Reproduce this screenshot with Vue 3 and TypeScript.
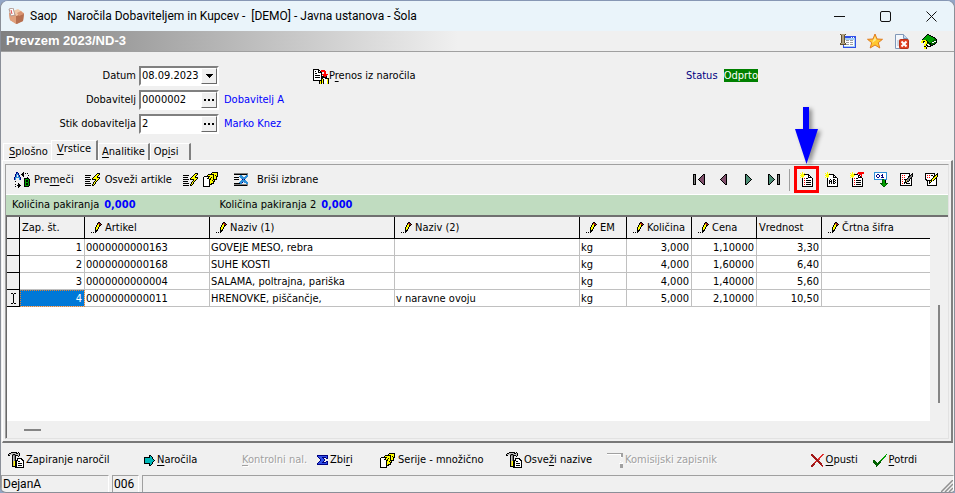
<script setup lang="ts">
import { h, ref } from 'vue'
import type { FunctionalComponent } from 'vue'

const palette: Record<string, string> = {
  k: '#000000', w: '#ffffff', y: '#ffff00', r: '#ff0000', g: '#00a000', G: '#006000',
  b: '#0040e0', n: '#000080', c: '#00b8b8', s: '#808080', l: '#c0c0c0', d: '#404040',
  p: '#80506c', t: '#4c8c74', m: '#a01818', e: '#e03030', o: '#d8c060', u: '#2f8fd8',
  a: '#a8d0f0', v: '#3050e8', q: '#b0a080', z: '#a0a0a0', x: '#605030',
}

const icons: Record<string, string[]> = {
  transfer: [
    'kkkkkk..........', 'kwwwwkk.rrrr....', 'kwkwwkwkrrrrr...', 'kwwwwkkkk..rr...',
    'kwkkwwwwk..rr...', 'kwwwwwwwkrrrrrr.', 'kwkkkkkwk.rrrr..', 'kwwwwwwwkkkrrk..',
    'kwkkkkkwkkkkkk..', 'kwwwwwwwkkwwkkkk', 'kwwwwwwwkykwwwyk', 'kkkkkkkkkykwwwyk',
    '......kykykwwwyk', '......kykykwwwyk', '......kyk.k...yk',
  ],
  move: [
    '..nn.....k......', '..nun...kk.k.k..', '.nuun..kkk......', '.nu.un..kk....k.',
    '.nu.un...k......', 'nuuuuun......k..', 'nu...un...kkkkk.', 'nu...un...kgggGk',
    '..........kgkkgk', '.k........kgkkgk', '..........kgggGk', '....k.....kgkkgk',
    '.k..kk....kgkkgk', '...kkkk...kgggGk', '.k..kk....kkkkk.', '....k...........',
  ],
  refresh: [
    '............kkk.', '...........kyyk.', 'kkkkkk....kyyk..', '.........kyyk...',
    'kkkkk...kyyykkk.', '.......kyyyyyyk.', 'kkkkkk.kkkkyyk..', '..........kyk...',
    'kkkkk....kyk....', '........kyk.....', 'kkkkkk..kyk.....', '.......kyk......',
    'kkkkkk.kk.......',
  ],
  stack: [
    '.........kkkkkk.', '........kyyyyyk.', '.....kkkkkkyyyk.', '....kyyyyykykyk.',
    '.kkkkkkyyykyykk.', 'kwwwwkyykykyyk..', 'kwwwkkykyykyyk..', 'kwwwwwkkyykkkk..',
    'kwwwwwkyykyk....', 'kwwwwwkyyykk....', 'kwwwwwkyyyk.....', 'kwwwwwkykkk.....',
    'kwwwwwkkk.......', 'kwwwwwk.........', 'kkkkkkk.........',
  ],
  erase: [
    'ssssssssssssss', 'kkkkkkkkkkkkks', '......uu....uu', '.....uuuu..uuu',
    'kkkkk.uuuuuuu.', '.......uuuuu..', 'kkkkk...nun...', '.......uuuuu..',
    '......uuuuuuu.', '.....uuun.uuuu', 'kkkkkkuu....uu', 'ssssssssssssss',
    'kkkkkkkkkkkkks',
  ],
  first: ['kkk.......kk', 'ksk......kpk', 'ksk.....kppk', 'ksk....kpppk', 'ksk...kppppk', 'ksk..kpppppk', 'ksk...kppppk', 'ksk....kpppk', 'ksk.....kppk', 'ksk......kpk', 'kkk.......kk'],
  prior: ['.....kk', '....kpk', '...kppk', '..kpppk', '.kppppk', 'kpppppk', '.kppppk', '..kpppk', '...kppk', '....kpk', '.....kk'],
  next: ['kk.....', 'ktk....', 'kttk...', 'ktttk..', 'kttttk.', 'ktttttk', 'kttttk.', 'ktttk..', 'kttk...', 'ktk....', 'kk.....'],
  last: ['kk.......kkk', 'ktk......ksk', 'kttk.....ksk', 'ktttk....ksk', 'kttttk...ksk', 'ktttttk..ksk', 'kttttk...ksk', 'ktttk....ksk', 'kttk.....ksk', 'ktk......ksk', 'kk.......kkk'],
  add: [
    '..y..........', 'y.y.y........', '.yyykkkkk....', 'yyyyywwwkk...',
    '.yyywwwwkwk..', 'y.y.wwwwkkkk.', '..kwrwkkwwwwk', '..kwwwwwwwwwk',
    '..kwrwkkkkkwk', '..kwwwwwwwwwk', '..kwrwkkkkkwk', '..kwwwwwwwwwk',
    '..kwrwkkkkkwk', '..kwwwwwwwwwk', '..kkkkkkkkkkk',
  ],
  addText: [
    '..y..........', 'y.y.y........', '.yyykkkkk....', 'yyyywwwwkk...',
    '.yyywwwwkwk..', 'y.y.wwwwkkkk.', '..kwwwwwwwwwk', '..kwwkwwkkwwk',
    '..kwkwkwkwkwk', '..kwkkkwkkwwk', '..kwkwkwkwkwk', '..kwkwkwkkwwk',
    '..kwwwwwwwwwk', '..kwwwwwwwwwk', '..kkkkkkkkkkk',
  ],
  addMarked: [
    '..y.....rrrrrr', 'y.y.y..rrrrrrr', '.yyykkkk.rrr..', 'yyyyywwwkk.r..',
    '.yyywwwwkwkr..', 'y.y.wwwwkkkk..', '..kwrwkkwwwwk.', '..kwwwwwwwwwk.',
    '..kwrwkkkkkwk.', '..kwwwwwwwwwk.', '..kwrwkkkkkwk.', '..kwwwwwwwwwk.',
    '..kwrwkkkkkwk.', '..kwwwwwwwwwk.', '..kkkkkkkkkkk.',
  ],
  digits: [
    'uuuuuuuuuuuuu...', 'uwwwwwwwwwwwu...', 'uwwnnwwwnwwwu...', 'uwnwwnwnnwwwu...',
    'uwnwwnwwnwwwu...', 'uwwnnwwnnnwwu...', 'uwwwwwwwwwwwu...', 'uuuuuuuuGGuuu...',
    '........Gggk....', '........Gggk....', '........Gggk....', '......GGGggGGG..',
    '.......GggggG...', '........GggG....', '.........GG.....',
  ],
  edit: [
    'kkkkkkkkkk..k', 'kwwwwwwwwk.kk', 'kwrwrwwwwkksk', 'kwwwwwwwkkssk',
    'kwrwrwwwkssk.', 'kwwwwwwksskk.', 'kwrwkkksskwk.', 'kwwwwkosskwk.',
    'kwrwwkokkwwk.', 'kwwwkkkwwwwk.', 'kwrwkwkkkkwk.', 'kwwwwwwwwwwk.',
    'kkkkkkkkkkkk.',
  ],
  editAlt: [
    'kkkkkkkkkk..k', 'kwwwwwwwwk.kk', 'kwrwrwkkwkkyk', 'kwwwwwwwkkyyk',
    'kwrwrwwwkyyk.', 'kwwwwwwkyykk.', 'kkwwwwkyykwk.', '.kkkkkkykwwk.',
    '..kwkykwwwwk.', '..kwkkwwwwwk.', '..kwkwwwwwwk.', '..kwwwwwwwwk.',
    '..kkkkkkkkkk.',
  ],
  pencil: [
    '.......kk..', '......kmmk.', '......kymmk', '.....kyykk.', '.....kyyk..', '....kyyk...',
    '....kyyk...', '....kyk....', '....kkk....', '....kk.....', 'k.k.k......',
  ],
  tools: [
    '...kkkkkk.k.....', '.kklllllkklk....', 'klllskkslllk....', 'kk..ksskkklk....',
    '....klsk..k.....', '....klsk........', '....klsk.kkkkk..', '....klsk.kwwwkk.',
    '....klskkkwwwwkk', '....koykkwkkwwwk', '....koykkwwwwwwk', '....koykkwkkkkwk',
    '....koykkwwwwwwk', '....koykkwkkkkwk', '....kkkkkwwwwwwk', '.......kkkkkkkkk',
  ],
  forward: ['.....kk....', '.....kck...', 'kkkkkkcck..', 'kccccccck..', 'kcccccccck.', 'kccccccccck', 'kcccccccck.', 'kccccccck..', 'kkkkkkcck..', '.....kck...', '.....kk....'],
  sum: ['nnnnnnnnnnn', 'nvvvvvvvvvn', '.nvvvnnnnvn', '..nvvvn..nn', '...nvvvn...', '...nvvvn...', '..nvvvn..nn', '.nvvvnnnnvn', 'nvvvvvvvvvn', 'nnnnnnnnnnn'],
  disabledDoc: ['zzzzzzzzzzzzzzzz', 'wwwwwwwwwwwwwwzz', '.............wzz', '.............wzz', '..............w.', '................', '................', '................', '.............w..', '...............w', '............wwww', '.............zzz', '.............zzz', '.............zzz', '.............zzz'],
  cancel: ['mm.........ee', 'mmm.......ee.', '.mmm.....ee..', '..mmm...ee...', '...mmm.ee....', '....mmmee....', '.....mmm.....', '....eemmm....', '...em..mmm...', '..mm....mmm..', '.mmm.....mm..', 'mmm.......mm.', 'mm.........e.'],
  confirm: ['.............g', '............g.', '...........gg.', '..........gg..', '.........gg...', '........gg....', 'GG.....gG.....', 'GGG...GG......', 'GGGG.GGG......', '.GGGGGG.......', '..GGGG........', '...GG.........', '...G..........'],
  cursor: ['kk.kk', '..k..', '..k..', '..k..', '..k..', '..k..', '..k..', '..k..', '..k..', '..k..', 'kk.kk'],
  columns: [
    'xqqqqx..........', '.xqqx...........', '.xqqxvvvvvvvvvvv', '.xqqxvvvvvvwvwvv', '.xqqxaaaaaaaaaav',
    '.xqqxaaaaaaaaaav', '.xqqxwzzzwzzzwav', '.xqqxwwwwwwwwwav', '.xqqxwzzzwzzzwav',
    'xqqqqxwwwwwwwwav', 'xxxxxxzzzwzzzwav', '...vwwwwwwwwwwav', '...vaaaaaaaaaaav', '...vvvvvvvvvvvvv',
  ],
  book: [
    '......kk........', '.....kggkk......', '....kgggggkk....', '...kggggggggkk..',
    '..kggggggggggGk.', '.kgggggggggggGGk', '.yyyykggggggGGGk', 'yykkyykggggGGwwk',
    'yyk.yykkggGwwGGk', '....yyGGkkGGGGk.', '...yykwwGkGGkk..', '...yykkwwkkk....',
    '...kk.kkkk......', '...yyk..........', '...yyk..........',
  ],
}

const PixelIcon: FunctionalComponent<{ name: string }> = (props) => {
  const rows = icons[props.name]
  const width = Math.max(...rows.map((r) => r.length))
  const cells = rows.flatMap((row, y) =>
    [...row].flatMap((c, x) => (palette[c] ? [h('rect', { x, y, width: 1, height: 1, fill: palette[c] })] : [])),
  )
  return h('svg', { width, height: rows.length, viewBox: `0 0 ${width} ${rows.length}`, 'shape-rendering': 'crispEdges', 'aria-hidden': 'true' }, cells)
}
PixelIcon.props = ['name']

const date = ref('08.09.2023')
const supplier = ref('0000002')
const contact = ref('2')

const columns = [
  { key: 'no', label: 'Zap. št.', editable: false },
  { key: 'item', label: 'Artikel', editable: true },
  { key: 'name1', label: 'Naziv (1)', editable: true },
  { key: 'name2', label: 'Naziv (2)', editable: true },
  { key: 'unit', label: 'EM', editable: true },
  { key: 'qty', label: 'Količina', editable: true },
  { key: 'price', label: 'Cena', editable: true },
  { key: 'value', label: 'Vrednost', editable: false },
  { key: 'barcode', label: 'Črtna šifra', editable: true },
]

const rows: Record<string, string>[] = [
  { no: '1', item: '0000000000163', name1: 'GOVEJE MESO, rebra', name2: '', unit: 'kg', qty: '3,000', price: '1,10000', value: '3,30', barcode: '' },
  { no: '2', item: '0000000000168', name1: 'SUHE KOSTI', name2: '', unit: 'kg', qty: '4,000', price: '1,60000', value: '6,40', barcode: '' },
  { no: '3', item: '0000000000004', name1: 'SALAMA, poltrajna, pariška', name2: '', unit: 'kg', qty: '4,000', price: '1,40000', value: '5,60', barcode: '' },
  { no: '4', item: '0000000000011', name1: 'HRENOVKE, piščančje,', name2: 'v naravne ovoju', unit: 'kg', qty: '5,000', price: '2,10000', value: '10,50', barcode: '' },
]
const selected = ref(3)

const navButtons = [
  { icon: 'first', label: 'Prvi' },
  { icon: 'prior', label: 'Prejšnji' },
  { icon: 'next', label: 'Naslednji' },
  { icon: 'last', label: 'Zadnji' },
]
const rowButtons = [
  { icon: 'addText', label: 'Dodaj opis' },
  { icon: 'addMarked', label: 'Vrini' },
  { icon: 'digits', label: 'Številčenje' },
  { icon: 'edit', label: 'Popravi' },
  { icon: 'editAlt', label: 'Uredi' },
]
</script>

<template>
  <div class="window">
    <header class="titlebar">
      <svg class="app-icon" width="18" height="17" viewBox="0 0 18 17" aria-hidden="true">
        <path d="M1 5l6-2 9 3-1 7-6 3-7-4z" fill="#c98563" />
        <path d="M1 5l7 3v8l-6-4z" fill="#e0a07c" />
        <path d="M8 8l8-3-1 8-7 3z" fill="#b66f50" />
        <path d="M5 3l5-2 6 4-8 3z" fill="#f0c8a8" />
        <path d="M9 5l4-2 3 3-5 2z" fill="#d99472" />
        <path d="M1 1l4-1 2 7-4 1z" fill="#fff" stroke="#b09890" />
        <path d="M3 2l1 4" stroke="#e04848" />
      </svg>
      <h1 class="title"><span>Saop</span><span>Naročila Dobaviteljem in Kupcev -&nbsp; [DEMO] - Javna ustanova - Šola</span></h1>
      <div class="window-buttons">
        <button type="button" aria-label="Pomanjšaj"><svg width="11" height="11" viewBox="0 0 11 11"><path d="M0 5.5h11" stroke="#111" /></svg></button>
        <button type="button" aria-label="Povečaj"><svg width="11" height="11" viewBox="0 0 11 11"><rect x=".5" y=".5" width="10" height="10" rx="1.5" fill="none" stroke="#111" /></svg></button>
        <button type="button" aria-label="Zapri"><svg width="11" height="11" viewBox="0 0 11 11"><path d="M.5.5l10 10m0-10l-10 10" stroke="#111" fill="none" /></svg></button>
      </div>
    </header>

    <div class="caption">
      <h2>Prevzem 2023/ND-3</h2>
      <div class="caption-tools">
        <button type="button" aria-label="Stolpci"><PixelIcon name="columns" /></button>
        <button type="button" aria-label="Priljubljene">
          <svg width="16" height="16" viewBox="0 0 16 16">
            <path d="M8 1l2 5 5.500.3-4.200 3.400 1.500 5.300L8 12l-4.800 3 1.500-5.300L.5 6.300 6 6z" fill="#ffc830" stroke="#e07a20" />
            <path d="M8 3.500L9.200 7 5 10z" fill="#ffe890" />
          </svg>
        </button>
        <button type="button" aria-label="Zapri dokument">
          <svg width="14" height="15" viewBox="0 0 14 15">
            <path d="M.5.5h8l4 4v10h-12z" fill="#f4f7fc" stroke="#8098b8" />
            <path d="M8.500.5v4h4" fill="#c8d8ee" stroke="#8098b8" />
            <path d="M2 7h2m-2 2h2m-2 2h2" stroke="#a8b8cc" />
            <rect x="4.500" y="5.500" width="9" height="9" rx="1" fill="#e04020" stroke="#b83018" />
            <path d="M6.500 7.500l5 5m0-5l-5 5" stroke="#fff" stroke-width="2" />
          </svg>
        </button>
        <button type="button" aria-label="Pomoč"><PixelIcon name="book" /></button>
      </div>
    </div>

    <section class="form">
      <div class="fields">
        <label for="date">Datum</label>
        <div class="field">
          <input id="date" v-model="date" type="text" />
          <button type="button" aria-label="Izberi datum"><svg width="7" height="4" viewBox="0 0 7 4" shape-rendering="crispEdges"><path d="M0 0h7L3.500 4z" /></svg></button>
        </div>
        <span></span>
        <label for="supplier">Dobavitelj</label>
        <div class="field">
          <input id="supplier" v-model="supplier" type="text" />
          <button type="button" aria-label="Izberi dobavitelja"><svg width="10" height="2" viewBox="0 0 10 2"><path d="M0 0h2v2H0zM4 0h2v2H4zM8 0h2v2H8z" /></svg></button>
        </div>
        <span class="linked">Dobavitelj A</span>
        <label for="contact">Stik dobavitelja</label>
        <div class="field">
          <input id="contact" v-model="contact" type="text" />
          <button type="button" aria-label="Izberi stik"><svg width="10" height="2" viewBox="0 0 10 2"><path d="M0 0h2v2H0zM4 0h2v2H4zM8 0h2v2H8z" /></svg></button>
        </div>
        <span class="linked">Marko Knez</span>
      </div>
      <button type="button" class="plain transfer"><PixelIcon name="transfer" /><span>P<u>r</u>enos iz naročila</span></button>
      <p class="status">Status <strong>Odprto</strong></p>
    </section>

    <nav class="tabs">
      <button type="button" class="tab"><span><u>S</u>plošno</span></button>
      <button type="button" class="tab active"><span><u>V</u>rstice</span></button>
      <button type="button" class="tab"><span><u>A</u>nalitike</span></button>
      <button type="button" class="tab"><span>Op<u>i</u>si</span></button>
    </nav>

    <main class="page">
      <div class="inner">
        <div class="toolbar">
          <button type="button" class="plain"><PixelIcon name="move" /><span>Pre<u>m</u>eči</span></button>
          <button type="button" class="plain"><PixelIcon name="refresh" /><span>Osveži artikle</span></button>
          <button type="button" class="plain" aria-label="Osveži serije"><PixelIcon name="refresh" /><PixelIcon name="stack" /></button>
          <button type="button" class="plain wide"><PixelIcon name="erase" /><span>Briši izbrane</span></button>
          <div class="icon-group">
            <button v-for="b in navButtons" :key="b.icon" type="button" class="plain" :aria-label="b.label"><PixelIcon :name="b.icon" /></button>
            <i class="separator"></i>
            <button type="button" class="plain highlighted" aria-label="Dodaj">
              <PixelIcon name="add" />
              <svg class="pointer" width="32" height="62" viewBox="0 0 32 62" aria-hidden="true">
                <path d="M13 2h6v22h9L16.500 59 5 24h8z" fill="#0000ff" />
              </svg>
            </button>
            <button v-for="b in rowButtons" :key="b.icon" type="button" class="plain" :aria-label="b.label"><PixelIcon :name="b.icon" /></button>
          </div>
        </div>

        <div class="summary">
          <span>Količina pakiranja</span><b>0,000</b>
          <span class="second">Količina pakiranja 2</span><b>0,000</b>
        </div>

        <div class="grid">
          <div class="sheet">
            <table>
              <colgroup>
                <col class="c-mark" /><col class="c-narrow" /><col class="c-item" /><col class="c-name" /><col class="c-name" />
                <col class="c-unit" /><col class="c-narrow" /><col class="c-narrow" /><col class="c-narrow" /><col />
              </colgroup>
              <thead>
                <tr>
                  <th></th>
                  <th v-for="c in columns" :key="c.key" :class="{ editable: c.editable }">
                    <div><PixelIcon v-if="c.editable" name="pencil" />{{ c.label }}</div>
                  </th>
                </tr>
              </thead>
              <tbody>
                <tr v-for="(row, i) in rows" :key="row.no" @click="selected = i">
                  <th><PixelIcon v-if="i === selected" name="cursor" /></th>
                  <td v-for="c in columns" :key="c.key" :class="[c.key, { selected: i === selected && c.key === 'no' }]">{{ row[c.key] }}</td>
                </tr>
              </tbody>
            </table>
          </div>
          <div class="scroll-v"><i></i></div>
          <div class="scroll-h"><i></i></div>
        </div>
      </div>
    </main>

    <footer class="actions">
      <button type="button" class="plain"><PixelIcon name="tools" /><span>Zapiranje naročil</span></button>
      <button type="button" class="plain"><PixelIcon name="forward" /><span><u>N</u>aročila</span></button>
      <button type="button" class="plain" disabled><span><u>K</u>ontrolni nal.</span></button>
      <button type="button" class="plain"><PixelIcon name="sum" /><span>Zbi<u>r</u>i</span></button>
      <button type="button" class="plain"><PixelIcon name="stack" /><span>Serije - množično</span></button>
      <button type="button" class="plain"><PixelIcon name="tools" /><span>Osve<u>ž</u>i nazive</span></button>
      <button type="button" class="plain" disabled><PixelIcon name="disabledDoc" /><span>Komisijski zapisnik</span></button>
      <button type="button" class="plain"><PixelIcon name="cancel" /><span><u>O</u>pusti</span></button>
      <button type="button" class="plain"><PixelIcon name="confirm" /><span><u>P</u>otrdi</span></button>
    </footer>

    <div class="statusbar">
      <span>DejanA</span>
      <span>006</span>
      <span class="rest">
        <svg width="12" height="12" viewBox="0 0 12 12" aria-hidden="true"><path d="M0 12L12 0M4 12l8-8M8 12l4-4" stroke="#909090" stroke-width="1.500" /></svg>
      </span>
    </div>
  </div>
</template>

<style>
body {
  background: #93a6c6;
}
</style>

<style scoped>
.window {
  box-sizing: border-box;
  min-height: 100vh;
  display: flex;
  flex-direction: column;
  overflow: hidden;
  border: 1px solid #8a8f98;
  border-top-color: #8797b4;
  border-radius: 8px 8px 4px 6px;
  background: #f0f0f0;
  color: #000;
  font: 11px/14px "DejaVu Sans Condensed", "Noto Sans", sans-serif;
}
button {
  padding: 0;
  border: 0;
  background: none;
  color: inherit;
  font: inherit;
  white-space: nowrap;
}
svg {
  display: block;
  flex: none;
}
u {
  text-underline-offset: 2px;
}
.titlebar {
  display: flex;
  align-items: center;
  height: 30px;
  padding-left: 7px;
  background: #eaf4fa;
}
.title {
  flex: 1;
  display: flex;
  gap: 10px;
  margin: 0 0 0 4px;
  font: 12px/16px Roboto, "Noto Sans", sans-serif;
  white-space: nowrap;
}
.window-buttons {
  display: flex;
}
.window-buttons button {
  display: grid;
  place-items: center;
  width: 46px;
  height: 30px;
}
.caption {
  display: flex;
  align-items: center;
  justify-content: space-between;
  height: 20px;
  padding: 0 17px 0 5px;
  border-bottom: 1px solid #a0a0a0;
  background: linear-gradient(90deg, #808080, #f0f0f0 48%);
}
.caption h2 {
  margin: 0;
  color: #fff;
  font: bold 13px/18px "Liberation Sans", sans-serif;
}
.caption-tools {
  display: flex;
  gap: 11px;
}
.caption-tools button {
  display: grid;
  place-items: center;
  min-width: 16px;
}
.form {
  display: grid;
  grid-template-columns: 312fr 373fr 268fr;
  align-items: start;
  padding: 14px 0 6px;
}
.fields {
  display: grid;
  grid-template-columns: 135px 80px 1fr;
  align-items: center;
  row-gap: 4px;
  column-gap: 3px;
}
.fields label {
  text-align: right;
}
.field {
  box-sizing: border-box;
  display: flex;
  height: 20px;
  border: 2px solid;
  border-color: #808080 #fff #fff #808080;
  background: #fff;
}
.field input {
  flex: 1;
  min-width: 0;
  padding: 0 1px;
  border: 0;
  outline: 0;
  background: none;
  font: inherit;
}
.field button {
  display: grid;
  place-items: center;
  width: 16px;
  border: 1px solid;
  border-color: #fff #696969 #696969 #fff;
  background: #f0f0f0;
}
.linked {
  padding-left: 2px;
  color: #0000ff;
}
.plain {
  display: flex;
  align-items: center;
  gap: 4px;
}
.plain:disabled {
  color: #a0a0a0;
  text-shadow: 1px 1px #fff;
}
.transfer {
  height: 20px;
  gap: 0;
}
.status {
  margin: 0;
  color: #000080;
  line-height: 20px;
}
.status strong {
  margin-left: 3px;
  background: #008000;
  color: #fff;
  font-weight: normal;
}
.tabs {
  display: flex;
  align-items: flex-end;
  padding-left: 2px;
}
.tab {
  height: 17px;
  padding: 0 3px;
  border-top: 1px solid #fff;
  border-right: 2px solid #808080;
  border-left: 1px solid #fff;
}
.tab:first-child {
  padding-left: 5px;
  border-right: 0;
}
.tab:last-child {
  padding-right: 11px;
}
.tab.active {
  height: 20px;
  padding: 0 5px 3px;
}
.page {
  flex: 1;
  display: flex;
  margin: 0 1px;
  padding: 3px 2px 2px;
  border: 1px solid #fff;
  border-right: 2px solid #808080;
  border-bottom: 2px solid #787878;
}
.inner {
  flex: 1;
  min-width: 0;
  display: flex;
  flex-direction: column;
  border: 1px solid #e2e2e2;
  border-top-color: #a0a0a0;
  border-left-color: #a0a0a0;
}
.toolbar {
  display: flex;
  align-items: center;
  height: 29px;
  gap: 11px;
  padding: 0 4px 0 8px;
  border-bottom: 1px solid #fff;
}
.toolbar .wide {
  gap: 9px;
  margin-left: 4px;
}
.icon-group {
  display: flex;
  align-items: center;
  margin-left: auto;
}
.icon-group .plain {
  justify-content: center;
  width: 25px;
  height: 27px;
}
.separator {
  width: 1px;
  height: 22px;
  margin: 0 4px 0 3px;
  background: #a0a0a0;
}
.icon-group .highlighted {
  position: relative;
  box-sizing: border-box;
  border: 3px solid #ff0000;
}
.pointer {
  position: absolute;
  bottom: 23px;
  left: -7px;
  filter: drop-shadow(3px 2px 2px #00000066);
}
.summary {
  display: flex;
  align-items: center;
  height: 20px;
  padding-left: 6px;
  background: #c0dcc0;
}
.summary b {
  margin-left: 5px;
  color: #0000ff;
}
.summary .second {
  margin-left: 84px;
}
.grid {
  flex: 1;
  display: grid;
  grid-template: 1fr 17px / minmax(0, 1fr) 18px;
  border-top: 2px solid #707070;
  border-left: 1px solid #696969;
}
.sheet {
  background: #fff;
}
table {
  width: 100%;
  table-layout: fixed;
  border-spacing: 0;
}
.c-mark { width: 13px; }
.c-narrow { width: 65px; }
.c-item { width: 125px; }
.c-name { width: 185px; }
.c-unit { width: 47px; }
th {
  padding: 0;
  border-right: 1px solid #000;
  border-bottom: 1px solid #000;
  background: #f0f0f0;
  font-weight: normal;
  text-align: left;
}
thead th {
  height: 21px;
}
th:last-child {
  border-right: 0;
}
thead th div {
  display: flex;
  align-items: center;
  gap: 3px;
  padding-left: 2px;
  white-space: nowrap;
}
thead .editable div {
  padding-left: 6px;
}
tbody th {
  height: 16px;
}
tbody th svg {
  margin: 0 auto;
}
td {
  height: 14px;
  padding: 2px 1px 0;
  overflow: hidden;
  border-right: 1px solid #c0c0c0;
  border-bottom: 1px solid #c0c0c0;
  white-space: nowrap;
}
td:last-child {
  border-right: 0;
}
.no,
.qty,
.price,
.value {
  padding-right: 2px;
  text-align: right;
}
.selected {
  outline: 1px dotted #e08030;
  outline-offset: -1px;
  background: #0078d7;
  color: #fff;
}
.scroll-v {
  display: flex;
  flex-direction: column;
  align-items: center;
  justify-content: flex-end;
}
.scroll-v i {
  width: 2px;
  height: 48%;
  margin-bottom: 18px;
  background: #858585;
}
.scroll-h {
  display: flex;
  align-items: center;
  padding-left: 17px;
}
.scroll-h i {
  width: 17px;
  height: 2px;
  background: #858585;
}
.actions {
  box-sizing: border-box;
  display: grid;
  grid-template-columns: 136px 98px 75px 63px 126px 101px 1fr 62px auto;
  align-items: center;
  height: 32px;
  padding: 2px 37px 0 7px;
}
.actions .plain {
  gap: 2px;
}
.statusbar {
  display: grid;
  grid-template-columns: 108px 27px 1fr;
  gap: 3px;
  height: 17px;
  font: 12px/16px Roboto, "Noto Sans", sans-serif;
}
.statusbar span {
  padding-left: 1px;
  border-top: 1px solid #a0a0a0;
  border-right: 1px solid #fff;
  border-left: 1px solid #a0a0a0;
}
.statusbar .rest {
  display: flex;
  align-items: flex-end;
  justify-content: flex-end;
}
</style>
